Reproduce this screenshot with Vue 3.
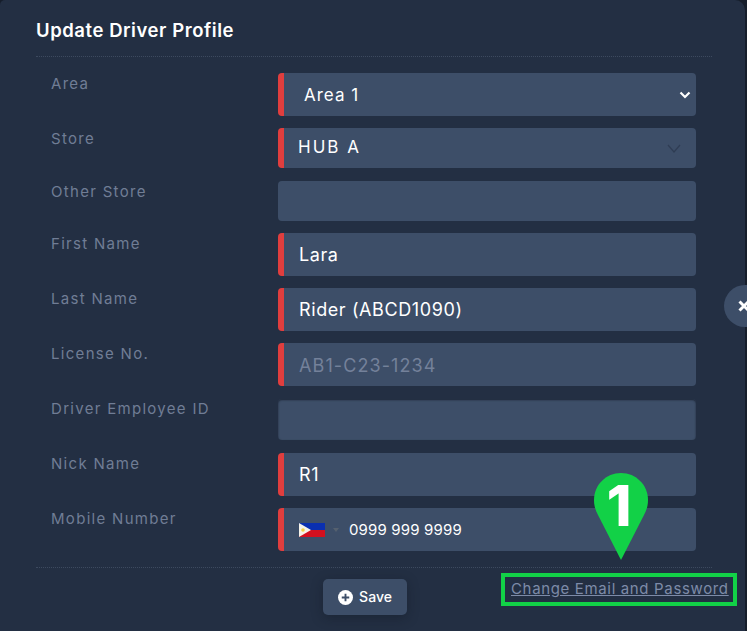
<script setup>
const rows = [
  { label: 'Area', value: 'Area 1', kind: 'area', req: true },
  { label: 'Store', value: 'HUB A', kind: 'store', req: true },
  { label: 'Other Store', value: '', kind: 'other' },
  { label: 'First Name', value: 'Lara', kind: 'text', req: true },
  { label: 'Last Name', value: 'Rider (ABCD1090)', kind: 'text', req: true },
  { label: 'License No.', value: 'AB1-C23-1234', kind: 'text ph', req: true },
  { label: 'Driver Employee ID', value: '', kind: 'emp' },
  { label: 'Nick Name', value: 'R1', kind: 'text', req: true },
  { label: 'Mobile Number', value: '0999 999 9999', kind: 'mobile', req: true },
]
</script>

<template>
  <div class="page">
    <div class="modal">
      <h1 class="title">Update Driver Profile</h1>
      <div class="rows">
        <div v-for="r in rows" :key="r.label" class="row" :class="r.kind">
          <div class="label">{{ r.label }}</div>
          <div class="field" :class="{ req: r.req }">
            <svg v-if="r.kind === 'mobile'" class="flag" viewBox="0 0 26 14" width="26" height="14">
              <rect width="26" height="7" fill="#0a2fb0" />
              <rect y="7" width="26" height="7" fill="#d3101f" />
              <polygon points="0,0 12,7 0,14" fill="#f6f3ea" />
              <circle cx="4" cy="7" r="1.8" fill="#f3cf4a" />
            </svg>
            <span v-if="r.kind === 'mobile'" class="caret"></span>
            <span class="value">{{ r.value }}</span>
            <svg v-if="r.kind === 'area'" class="chev-a" viewBox="0 0 12 8" width="12" height="8">
              <path d="M1.500 1.500 6 6l4.500-4.500" fill="none" stroke="#fff" stroke-width="2.200" />
            </svg>
            <svg v-if="r.kind === 'store'" class="chev-s" viewBox="0 0 14 9" width="14" height="9">
              <path d="M1 1l6 7 6-7" fill="none" stroke="#2f3d54" stroke-width="1.200" />
            </svg>
          </div>
        </div>
      </div>
      <div class="footer">
        <button class="save" type="button">
          <svg viewBox="0 0 16 16" width="15" height="15">
            <circle cx="8" cy="8" r="8" fill="#fff" />
            <path d="M8 4v8M4 8h8" stroke="#3d4e68" stroke-width="2" />
          </svg>
          <span class="save-text">Save</span>
        </button>
        <a class="link">Change Email and Password</a>
      </div>
    </div>
    <div class="close">
      <svg viewBox="0 0 12 12" width="12" height="12">
        <path d="M1.500 1.500l9 9M10.500 1.500l-9 9" stroke="#fff" stroke-width="3" />
      </svg>
    </div>
    <div class="pin">
      <svg viewBox="0 0 54 87" width="54" height="87">
        <path d="M27 0C42 0 54 12 54 27c0 6-1.500 10-4 15L27 87 4 42C1.500 37 0 33 0 27 0 12 12 0 27 0z" fill="#12d147" />
      </svg>
      <span class="pin-num">1</span>
    </div>
  </div>
</template>

<style scoped>
.page {
  position: relative;
  width: 747px;
  height: 631px;
  overflow: hidden;
  background: #161e2b;
  font-family: Inter, "Open Sans", sans-serif;
}
.modal {
  width: 745px;
  height: 640px;
  background: #232f43;
  border-radius: 5px 10px 10px 5px;
  padding: 0 0 0 36px;
  box-sizing: border-box;
}
.title {
  margin: 0;
  height: 57px;
  width: 676px;
  box-sizing: border-box;
  padding-top: 19px;
  color: #fff;
  font-size: 18.500px;
  line-height: 22px;
  font-weight: 600;
  letter-spacing: 0.55px;
  border-bottom: 1px dotted #3d4a5f;
}
.rows {
  padding: 16px 0 0 0;
  width: 660px;
  height: 510px;
  box-sizing: border-box;
}
.row {
  display: flex;
  align-items: flex-start;
  margin-bottom: 12px;
}
.row.store, .row.emp, .row.ph { margin-bottom: 13px; }
.label {
  width: 227px;
  margin-left: 15px;
  padding-top: 2px;
  color: #707d95;
  font-size: 15px;
  line-height: 18px;
  letter-spacing: 1.3px;
  flex: none;
}
.emp .label { padding-top: 1px; }
.field {
  position: relative;
  width: 418px;
  height: 43px;
  box-sizing: border-box;
  background: #3d4e68;
  border-radius: 4px;
  display: flex;
  align-items: center;
  padding-left: 21px;
  color: #fff;
  font-size: 18px;
  letter-spacing: 0.6px;
}
.field.req { border-left: 6px solid #e03e3e; padding-left: 15px; }
.area .field { padding-left: 20px; }
.area .value { font-size: 17px; letter-spacing: 1px; margin-top: 1px; }
.store .field { height: 40px; padding-left: 14px; }
.store .value { font-size: 17px; letter-spacing: 2px; margin-top: -2px; }
.other .field { height: 40px; }
.emp .field { height: 41px; box-shadow: inset 0 1px 2px #1b2535; }
.ph .value { color: #74819a; letter-spacing: 1.1px; margin-top: 1px; }
.mobile .value { font-size: 15px; letter-spacing: 0.15px; }
.chev-a { position: absolute; right: 5px; top: 18px; }
.chev-s { position: absolute; right: 15px; top: 16px; }
.flag { flex: none; }
.caret {
  width: 0;
  height: 0;
  border: 3px solid transparent;
  border-top: 4px solid #55606f;
  border-bottom: 0;
  margin: 0 10px 0 8px;
}
.footer {
  display: flex;
  align-items: flex-start;
  border-top: 1px dotted #3d4a5f;
  width: 676px;
  height: 62px;
  box-sizing: border-box;
  position: relative;
}
.save {
  margin: 11px 0 0 287px;
  width: 84px;
  height: 36px;
  border: 0;
  border-radius: 5px;
  background: #3d4e68;
  box-shadow: 0 3px 12px rgba(15, 20, 30, 0.35);
  color: #fff;
  font: 500 14px Inter, sans-serif;
  display: flex;
  align-items: center;
  justify-content: center;
  gap: 6px;
}
.save-text { margin-top: -2px; }
.link {
  position: absolute;
  left: 465px;
  top: 5px;
  width: 236px;
  height: 33px;
  box-sizing: border-box;
  border: 4px solid #12d147;
  padding-left: 6px;
  padding-top: 1px;
  color: #7d8ba8;
  font-size: 15px;
  line-height: 22px;
  letter-spacing: 0.65px;
  text-decoration: underline;
  white-space: nowrap;
}
.close {
  position: absolute;
  left: 724px;
  top: 285px;
  width: 42px;
  height: 42px;
  border-radius: 50%;
  background: #3d4e68;
  display: flex;
  align-items: center;
  padding-left: 14px;
  box-sizing: border-box;
}
.pin {
  position: absolute;
  left: 594px;
  top: 473px;
  width: 54px;
  height: 87px;
}
.pin svg { display: block; }
.pin-num {
  position: absolute;
  left: 11px;
  top: 0;
  width: 28px;
  text-align: center;
  color: #fff;
  font-size: 56px;
  line-height: 66px;
  font-weight: 800;
}
</style>
